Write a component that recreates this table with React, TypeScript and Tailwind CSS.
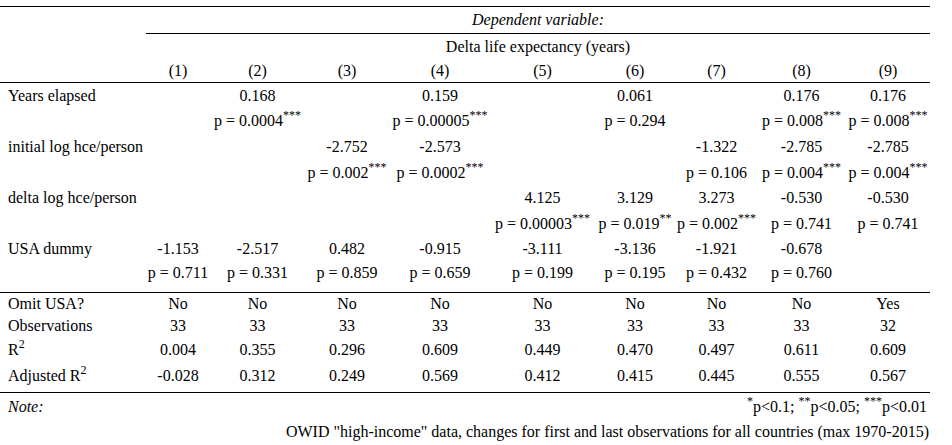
import React from 'react';

type PVal = { p: string; stars: string };
type Cell = string | PVal | null;

interface CoefRow {
  label: string;
  coefs: Cell[];
  pvals: Cell[];
}

// column grid: label + 9 models
const GRID = "grid grid-cols-[146px_64px_95px_84px_102px_103px_82px_81px_89px_84px]";

const coefRows: CoefRow[] = [
  {
    label: "Years elapsed",
    coefs: [null, "0.168", null, "0.159", null, "0.061", null, "0.176", "0.176"],
    pvals: [
      null,
      { p: "0.0004", stars: "***" },
      null,
      { p: "0.00005", stars: "***" },
      null,
      { p: "0.294", stars: "" },
      null,
      { p: "0.008", stars: "***" },
      { p: "0.008", stars: "***" },
    ],
  },
  {
    label: "initial log hce/person",
    coefs: [null, null, "-2.752", "-2.573", null, null, "-1.322", "-2.785", "-2.785"],
    pvals: [
      null,
      null,
      { p: "0.002", stars: "***" },
      { p: "0.0002", stars: "***" },
      null,
      null,
      { p: "0.106", stars: "" },
      { p: "0.004", stars: "***" },
      { p: "0.004", stars: "***" },
    ],
  },
  {
    label: "delta log hce/person",
    coefs: [null, null, null, null, "4.125", "3.129", "3.273", "-0.530", "-0.530"],
    pvals: [
      null,
      null,
      null,
      null,
      { p: "0.00003", stars: "***" },
      { p: "0.019", stars: "**" },
      { p: "0.002", stars: "***" },
      { p: "0.741", stars: "" },
      { p: "0.741", stars: "" },
    ],
  },
  {
    label: "USA dummy",
    coefs: ["-1.153", "-2.517", "0.482", "-0.915", "-3.111", "-3.136", "-1.921", "-0.678", null],
    pvals: ["0.711", "0.331", "0.859", "0.659", "0.199", "0.195", "0.432", "0.760", null].map(
      (v) => (v ? { p: v, stars: "" } : null)
    ),
  },
];

// heights picked so every line sits where the original does
const rowHeights: [string, string][] = [
  ["h-[25px] leading-[25px]", "h-[26px] leading-[26px]"],
  ["h-[26px] leading-[26px]", "h-[25px] leading-[25px]"],
  ["h-[26px] leading-[26px]", "h-[25px] leading-[25px]"],
  ["h-[26px] leading-[26px]", "h-[30px] leading-[22px]"],
];

const stats = [
  { label: "Omit USA?", sup: false, cls: "h-[21px] leading-[21px]", values: ["No", "No", "No", "No", "No", "No", "No", "No", "Yes"] },
  { label: "Observations", sup: false, cls: "h-[23px] leading-[23px]", values: ["33", "33", "33", "33", "33", "33", "33", "33", "32"] },
  { label: "R", sup: true, cls: "h-[26px] leading-[26px]", values: ["0.004", "0.355", "0.296", "0.609", "0.449", "0.470", "0.497", "0.611", "0.609"] },
  { label: "Adjusted R", sup: true, cls: "h-[26px] leading-[26px]", values: ["-0.028", "0.312", "0.249", "0.569", "0.412", "0.415", "0.445", "0.555", "0.567"] },
];

function Sup({ children }: { children: React.ReactNode }) {
  return <sup className="top-[-0.6em]">{children}</sup>;
}

function renderCell(cell: Cell) {
  if (!cell) return null;
  if (typeof cell === "string") return cell;
  return (
    <>
      p = {cell.p}
      {cell.stars && <Sup>{cell.stars}</Sup>}
    </>
  );
}

export default function App() {
  return (
    <div className="w-[952px] h-[445px] bg-white text-black font-['Liberation_Serif','Times_New_Roman',serif] text-[16px] pt-[6px]">
      <div className="w-[930px]">
        <div className="h-px bg-black" />

        {/* header */}
        <div className={GRID}>
          <div />
          <div className="col-span-9 h-[26px] leading-[26px] text-center italic">Dependent variable:</div>
        </div>
        <div className="h-px bg-black ml-[146px]" />
        <div className={GRID}>
          <div />
          <div className="col-span-9 h-[25px] leading-[25px] text-center">Delta life expectancy (years)</div>
        </div>
        <div className={GRID + " h-[23px] leading-[23px]"}>
          <div />
          {[1, 2, 3, 4, 5, 6, 7, 8, 9].map((n) => (
            <div key={n} className="text-center">({n})</div>
          ))}
        </div>
        <div className="h-px bg-black" />

        {/* coefficients */}
        {coefRows.map((row, i) => (
          <div key={row.label}>
            <div className={GRID + " " + rowHeights[i][0]}>
              <div className="pl-[8px] whitespace-nowrap">{row.label}</div>
              {row.coefs.map((c, j) => (
                <div key={j} className="text-center whitespace-nowrap">{renderCell(c)}</div>
              ))}
            </div>
            <div className={GRID + " " + rowHeights[i][1]}>
              <div />
              {row.pvals.map((c, j) => (
                <div key={j} className="text-center whitespace-nowrap">{renderCell(c)}</div>
              ))}
            </div>
          </div>
        ))}
        <div className="h-px bg-black" />

        {/* model stats */}
        <div className="pb-[3px]">
          {stats.map((s) => (
            <div key={s.label} className={GRID + " " + s.cls}>
              <div className="pl-[8px] whitespace-nowrap">
                {s.label}
                {s.sup && <Sup>2</Sup>}
              </div>
              {s.values.map((v, j) => (
                <div key={j} className="text-center">{v}</div>
              ))}
            </div>
          ))}
        </div>
        <div className="h-px bg-black" />

        {/* notes */}
        <div className={GRID + " h-[28px] leading-[28px]"}>
          <div className="pl-[8px] italic">Note:</div>
          <div className="col-span-9 text-right pr-[3px] whitespace-nowrap">
            <Sup>*</Sup>p&lt;0.1; <Sup>**</Sup>p&lt;0.05; <Sup>***</Sup>p&lt;0.01
          </div>
        </div>
        <div className={GRID + " h-[22px] leading-[22px]"}>
          <div />
          <div className="col-span-9 text-right pr-[1px] whitespace-nowrap">
            OWID "high-income" data, changes for first and last observations for all countries (max 1970-2015)
          </div>
        </div>
      </div>
    </div>
  );
}
